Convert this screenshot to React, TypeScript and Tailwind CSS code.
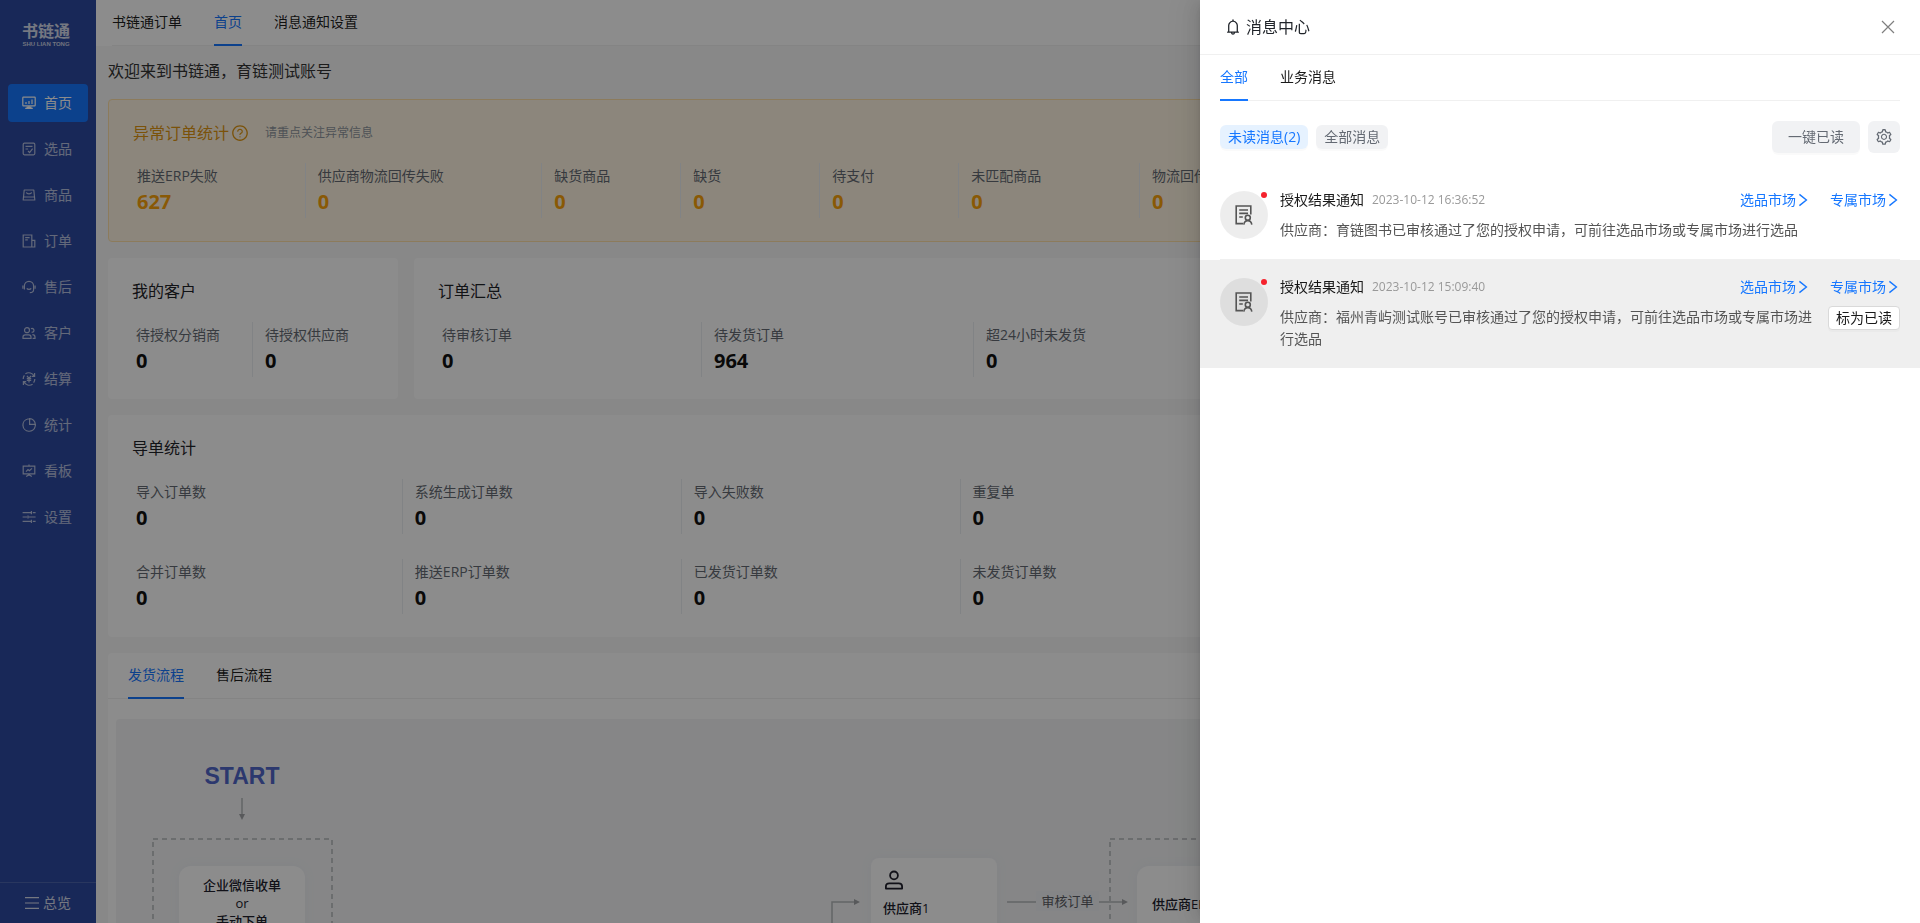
import { useState } from "react";
import type { ReactNode } from "react";
import { AiOutlineBell, AiOutlineQuestionCircle, AiOutlineSetting } from "react-icons/ai";

// icons
const Icon = ({ children, className = "size-3.5" }: { children: ReactNode; className?: string }) => (
  <svg
    viewBox="0 0 14 14"
    className={className}
    fill="none"
    stroke="currentColor"
    strokeWidth="1.2"
    aria-hidden="true"
  >
    {children}
  </svg>
);

const HomeIcon = () => (
  <Icon>
    <rect x="0.8" y="1.1" width="12.4" height="8.8" rx="0.6" />
    <path d="M4 8V6M7 8V5M10 8V3.6M7 10v2.4M3.2 12.4h7.6M4.5 11.2h5" />
  </Icon>
);

const PickIcon = () => (
  <Icon>
    <rect x="1.2" y="1.2" width="11.6" height="11.6" rx="1.2" />
    <path d="M3.5 4.4h7M3.5 7h2.6M6 9l1.6 1.6 3-4" />
  </Icon>
);

const GoodsIcon = () => (
  <Icon>
    <path d="M2.2 2h9.6l1 10H1.2z" strokeLinejoin="round" />
    <path d="M1.6 9h10.8M4.4 4.4c.4 2 4.8 2 5.200 0" />
  </Icon>
);

const OrderIcon = () => (
  <Icon>
    <path d="M1.2 1h8.6v12H1.2zM9.800 6.400h3V13h-3M3.2 3.600h4.400M3.200 5.800h2.600" />
  </Icon>
);

const ServiceIcon = () => (
  <Icon>
    <path d="M2.400 9.400V6a4.600 4.600 0 0 1 9.200 0v3.400c0 2-1.400 3.200-3.800 3.200" />
    <path d="M.9 5.400v3.400M13.100 5.400v3.400M4.800 8.400c1 1.400 3.400 1.400 4.400 0" />
  </Icon>
);

const CustomerIcon = () => (
  <Icon>
    <circle cx="5" cy="4.200" r="2.500" />
    <path d="M1 12.400v-1.400c0-1.400.8-2.200 2.200-2.200h3.600c1.400 0 2.200.8 2.200 2.200v1.400z" />
    <path d="M9 2.800a1.900 1.900 0 1 1 .6 3.400M10.400 8.600c1.800 0 2.600.8 2.600 2.400v1.400h-2.400" />
  </Icon>
);

const SettleIcon = () => (
  <Icon>
    <path d="M3.400 1.800a6 6 0 0 1 8.800 2.400M12.600 1v3.400H9.800M10.600 12.200A6 6 0 0 1 1.800 9.800M1.400 13V9.600h2.800M1.200 7c0-1.400.4-2.600 1.200-3.600M12.800 7c0 1.400-.4 2.600-1.200 3.600" />
    <path d="M5 3.800l2 2.600 2-2.600M7 6.400v4M4.800 6.600h4.400M4.800 8.400h4.400" />
  </Icon>
);

const PieIcon = () => (
  <Icon>
    <path d="M5.800 1A6.200 6.200 0 1 0 13.200 8.400" />
    <path d="M7.600.7v5.700h5.700A5.700 5.700 0 0 0 7.600.7zM13.200 8.400a6 6 0 0 0 .1-2M5.800 1a6 6 0 0 1 1.800-.3" />
  </Icon>
);

const BoardIcon = () => (
  <Icon>
    <path d="M1.200 2.200h11.600v7.600H1.200zM7 .6v1.600M7 9.800v2M4.200 12.600L7 10.800l2.800 1.800M4 7.600l2-2 1.400 1.200L10 4.400" />
  </Icon>
);

const SlidersIcon = () => (
  <Icon>
    <path d="M.6 2.600h8.600M10.800 2.600h2.800M.6 7h4.400M6.800 7h6.800M.6 11.400h8.600M10.800 11.400h2.800M9.400 1v3.200M6 5.400v3.200M9.400 9.800V13" />
  </Icon>
);

const MenuLinesIcon = () => (
  <Icon>
    <path d="M0 1.600h14M0 7h14M0 12.400h14" />
  </Icon>
);

const CloseIcon = () => (
  <Icon>
    <path d="M1 1l12 12M13 1L1 13" />
  </Icon>
);

const RightIcon = () => (
  <Icon>
    <path d="M3.400 1.400l7 5.600-7 5.600" strokeWidth="1.400" />
  </Icon>
);

const AuditIcon = () => (
  <svg viewBox="0 0 20 20" className="size-5" fill="none" stroke="currentColor" strokeWidth="1.6" aria-hidden="true">
    <path d="M9 18.600H2.200V1h14.600v8.600M5.200 5h8.800M5.200 8.400h8.800M5.200 12h3.600" />
    <circle cx="13.800" cy="12.800" r="2.500" />
    <path d="M9.800 19.600c.4-2.600 1.800-4 4-4s3.600 1.400 4 4" />
  </svg>
);

const UserIcon = () => (
  <svg viewBox="0 0 18 20" className="h-5 w-[18px]" fill="none" stroke="currentColor" strokeWidth="1.8" aria-hidden="true">
    <circle cx="9" cy="5.400" r="3.900" />
    <path d="M.9 18.600v-2c0-2.200 1.100-3.300 3.300-3.300h9.600c2.200 0 3.300 1.100 3.300 3.300v2z" strokeLinejoin="round" />
  </svg>
);

// data
const menu = [
  { label: "首页", icon: <HomeIcon /> },
  { label: "选品", icon: <PickIcon /> },
  { label: "商品", icon: <GoodsIcon /> },
  { label: "订单", icon: <OrderIcon /> },
  { label: "售后", icon: <ServiceIcon /> },
  { label: "客户", icon: <CustomerIcon /> },
  { label: "结算", icon: <SettleIcon /> },
  { label: "统计", icon: <PieIcon /> },
  { label: "看板", icon: <BoardIcon /> },
  { label: "设置", icon: <SlidersIcon /> },
];

const abnormal = [
  { label: "推送ERP失败", value: 627 },
  { label: "供应商物流回传失败", value: 0 },
  { label: "缺货商品", value: 0 },
  { label: "缺货", value: 0 },
  { label: "待支付", value: 0 },
  { label: "未匹配商品", value: 0 },
  { label: "物流回传异常", value: 0 },
];

const customers = [
  { label: "待授权分销商", value: 0 },
  { label: "待授权供应商", value: 0 },
];

const orders = [
  { label: "待审核订单", value: 0 },
  { label: "待发货订单", value: 964 },
  { label: "超24小时未发货", value: 0 },
];

const imports = [
  { label: "导入订单数", value: 0 },
  { label: "系统生成订单数", value: 0 },
  { label: "导入失败数", value: 0 },
  { label: "重复单", value: 0 },
  { label: "合并订单数", value: 0 },
  { label: "推送ERP订单数", value: 0 },
  { label: "已发货订单数", value: 0 },
  { label: "未发货订单数", value: 0 },
];

const messages = [
  {
    time: "2023-10-12 16:36:52",
    text: "供应商：育链图书已审核通过了您的授权申请，可前往选品市场或专属市场进行选品",
    active: false,
  },
  {
    time: "2023-10-12 15:09:40",
    text: "供应商：福州青屿测试账号已审核通过了您的授权申请，可前往选品市场或专属市场进行选品",
    active: true,
  },
];

const Tabs = ({ items, initial = 0 }: { items: string[]; initial?: number }) => {
  const [current, setCurrent] = useState<number>(initial);

  return (
    <div className="flex h-[46px] gap-8 border-b border-[#f0f0f0]">
      {items.map((item, i) => (
        <button
          key={item}
          type="button"
          onClick={() => setCurrent(i)}
          className={
            i === current
              ? "-mb-px border-b-2 border-[#1677ff] text-[#1677ff]"
              : "-mb-px border-b-2 border-transparent text-black/90"
          }
        >
          {item}
        </button>
      ))}
    </div>
  );
};

const Stat = ({ label, value, first, warn }: { label: string; value: number; first: boolean; warn?: boolean }) => (
  <div className={first ? "h-[55px] pt-0.5 pl-3" : "-ml-px h-[55px] border-l border-[#eceef2] pt-0.5 pl-3"}>
    <div className="leading-[22px] whitespace-nowrap text-[#646a73]">{label}</div>
    <div className={warn ? "text-xl leading-[30px] font-bold text-[#faa20a]" : "text-xl leading-[30px] font-bold text-[#111]"}>
      {value}
    </div>
  </div>
);

const Sidebar = () => (
  <aside className="flex w-24 shrink-0 flex-col bg-[#2c49a0] text-white">
    <div className="flex h-[84px] flex-col items-center pt-[22px] pr-1">
      <div className="text-base leading-[18px] font-bold text-white/80">书链通</div>
      <div className="font-['Liberation_Sans'] text-[6px] leading-2 font-bold whitespace-nowrap text-white/75">
        SHU LIAN TONG
      </div>
    </div>
    <nav className="flex flex-1 flex-col gap-2 px-2">
      {menu.map((item, i) => (
        <a
          key={item.label}
          href="#"
          className={
            i === 0
              ? "flex h-[38px] items-center gap-2 rounded bg-[#1677ff] pl-3.5 text-white"
              : "flex h-[38px] items-center gap-2 rounded pl-3.5 text-white/65"
          }
        >
          {item.icon}
          {item.label}
        </a>
      ))}
    </nav>
    <button type="button" className="flex h-[41px] items-center justify-center gap-1 border-t border-white/15 text-white/80">
      <MenuLinesIcon />
      总览
    </button>
  </aside>
);

const FlowChart = () => (
  <div className="relative h-[520px] overflow-hidden rounded bg-[#f4f5f6] text-[13px] font-medium text-[#20202c]">
    <svg className="absolute top-0 left-0 h-full w-full" fill="none" stroke="#b4b6ba" strokeWidth="1.5">
      <path d="M126 79v18" />
      <path d="M123 95h6l-3 6z" fill="#a0a2a6" stroke="none" />
      <rect x="37" y="120" width="179" height="320" strokeDasharray="5 4" />
      <rect x="994" y="120" width="179" height="320" strokeDasharray="5 4" />
      <path d="M716 300V183h22M891 183h29M983 183h23" />
      <path d="M738 180v6l6-3zM1006 180v6l6-3z" fill="#a0a2a6" stroke="none" />
    </svg>
    <div className="absolute top-[43px] left-[51px] w-[150px] text-center font-['Liberation_Sans'] text-[23px] leading-7 font-bold text-[#5066c8]">
      START
    </div>
    <div className="absolute top-[147px] left-[63px] w-[126px] rounded-xl bg-white py-2.5 text-center leading-[18px] shadow-[0_0_12px_#eceff5]">
      企业微信收单
      <br />
      or
      <br />
      手动下单
    </div>
    <div className="absolute top-[139px] left-[755px] w-[126px] rounded-lg bg-white p-3 pb-6 shadow-[0_0_12px_#eceff5]">
      <div className="pl-0.5">
        <UserIcon />
      </div>
      <div className="mt-2 leading-5">供应商1</div>
    </div>
    <div className="absolute top-[172px] left-[920px] w-[63px] bg-[#f0f2f6] text-center leading-5 font-normal text-[#5c5e64]">
      审核订单
    </div>
    <div className="absolute top-[147px] left-[1021px] w-[126px] rounded-xl bg-white px-[15px] py-7 leading-5 shadow-[0_0_12px_#eceff5]">
      供应商ERP
    </div>
  </div>
);

const Dashboard = () => (
  <div className="min-w-0 flex-1 overflow-hidden bg-[#f7f7f8]">
    <header className="bg-white px-4">
      <Tabs items={["书链通订单", "首页", "消息通知设置"]} initial={1} />
    </header>

    <main className="flex flex-col gap-4 px-3 pt-[13px]">
      <h1 className="text-base leading-6 text-[#333]">欢迎来到书链通，育链测试账号</h1>

      <section className="rounded border border-[#ffe1a8] bg-[#fff5e2] px-4 pt-[21px] pb-[23px]">
        <div className="mb-[18px] flex h-6 items-center px-2 text-base text-[#e09612]">
          异常订单统计
          <AiOutlineQuestionCircle className="ml-0.5 size-[18px]" />
          <span className="ml-4 text-xs text-[#8f959e]">请重点关注异常信息</span>
        </div>
        <div className="grid grid-cols-[1.3fr_1.7fr_1fr_1fr_1fr_1.3fr_5.4fr]">
          {abnormal.map((item, i) => (
            <Stat key={item.label} {...item} first={i === 0} warn />
          ))}
        </div>
      </section>

      <div className="flex gap-4">
        <section className="w-[290px] rounded bg-white px-4 pt-[21px] pb-[22px]">
          <h2 className="mb-[19px] px-2 text-base leading-6 text-[#1f2329]">我的客户</h2>
          <div className="grid grid-cols-2">
            {customers.map((item, i) => (
              <Stat key={item.label} {...item} first={i === 0} />
            ))}
          </div>
        </section>
        <section className="flex-1 rounded bg-white px-4 pt-[21px] pb-[22px]">
          <h2 className="mb-[19px] px-2 text-base leading-6 text-[#1f2329]">订单汇总</h2>
          <div className="grid grid-cols-[8fr_8fr_27fr]">
            {orders.map((item, i) => (
              <Stat key={item.label} {...item} first={i === 0} />
            ))}
          </div>
        </section>
      </div>

      <section className="rounded bg-white px-4 pt-[21px] pb-[23px]">
        <h2 className="mb-[19px] px-2 text-base leading-6 text-[#1f2329]">导单统计</h2>
        <div className="grid grid-cols-[50fr_50fr_50fr_167fr] gap-y-[25px]">
          {imports.map((item, i) => (
            <Stat key={item.label} {...item} first={i % 4 === 0} />
          ))}
        </div>
      </section>

      <section className="rounded bg-white">
        <div className="[&>div]:px-5">
          <Tabs items={["发货流程", "售后流程"]} />
        </div>
        <div className="px-2 pt-5 pb-2">
          <FlowChart />
        </div>
      </section>
    </main>
  </div>
);

const MarketLink = ({ children }: { children: ReactNode }) => (
  <a href="#" className="flex items-center text-[#1677ff]">
    {children}
    <RightIcon />
  </a>
);

const Drawer = () => (
  <div
    role="dialog"
    aria-label="消息中心"
    className="fixed inset-y-0 right-0 w-[720px] max-w-full bg-white shadow-[-6px_0_16px_0_rgba(0,0,0,0.08),-3px_0_6px_-4px_rgba(0,0,0,0.12),-9px_0_28px_8px_rgba(0,0,0,0.05)]"
  >
    <div className="flex h-[55px] items-center border-b border-[#f0f0f0] px-6 text-base text-[#1f2329]">
      <AiOutlineBell className="mr-1 size-[18px]" />
      消息中心
      <button type="button" aria-label="关闭" className="mr-px ml-auto text-black/50">
        <CloseIcon />
      </button>
    </div>

    <div className="px-5">
      <Tabs items={["全部", "业务消息"]} />
    </div>

    <div className="flex items-center gap-2 p-5">
      <button type="button" className="h-6 rounded-md bg-[#e6f2ff] px-2 text-[#1677ff] shadow-[0_2px_0_rgba(0,0,0,0.02)]">
        未读消息(2)
      </button>
      <button type="button" className="h-6 rounded-md bg-[#f1f2f4] px-2 text-[#646a73] shadow-[0_2px_0_rgba(0,0,0,0.02)]">
        全部消息
      </button>
      <button
        type="button"
        className="ml-auto h-8 rounded-md bg-[#f1f2f4] px-4 text-[#646a73] shadow-[0_2px_0_rgba(0,0,0,0.02)]"
      >
        一键已读
      </button>
      <button
        type="button"
        aria-label="设置"
        className="flex size-8 items-center justify-center rounded-md bg-[#f1f2f4] text-[#646a73]"
      >
        <AiOutlineSetting className="size-[18px]" />
      </button>
    </div>

    <ul>
      {messages.map((msg) => (
        <li key={msg.time} className={msg.active ? "bg-[#efefef] px-5" : "px-5"}>
          <div
            className={
              msg.active ? "flex gap-3 pt-4 pb-[18px]" : "flex gap-3 border-b border-[#f0f0f0] pt-4 pb-[18px]"
            }
          >
            <div className="relative mt-0.5 flex size-12 shrink-0 items-center justify-center rounded-full bg-black/7 text-[#555]">
              <AuditIcon />
              <span className="absolute top-px right-px size-1.5 rounded-full bg-[#f5222d]" />
            </div>
            <div className="flex-1">
              <div className="flex items-center leading-[22px]">
                <span className="text-black/90">授权结果通知</span>
                <span className="ml-2 text-xs text-[#999]">{msg.time}</span>
                <div className="ml-auto flex gap-5">
                  <MarketLink>选品市场</MarketLink>
                  <MarketLink>专属市场</MarketLink>
                </div>
              </div>
              <div className="mt-2 flex items-start gap-3.5">
                <p className="flex-1 leading-[22px] text-[#555]">{msg.text}</p>
                {msg.active && (
                  <button
                    type="button"
                    className="h-6 rounded border border-[#d9d9d9] bg-white px-[7px] text-black/90 shadow-[0_2px_0_rgba(0,0,0,0.02)]"
                  >
                    标为已读
                  </button>
                )}
              </div>
            </div>
          </div>
        </li>
      ))}
    </ul>
  </div>
);

const App = () => {
  return (
    <div className="flex h-screen overflow-hidden font-['Open_Sans','Noto_Sans_CJK_SC',sans-serif] text-sm">
      <Sidebar />
      <Dashboard />
      <div className="fixed inset-0 bg-black/45" />
      <Drawer />
    </div>
  );
};

export default App;
